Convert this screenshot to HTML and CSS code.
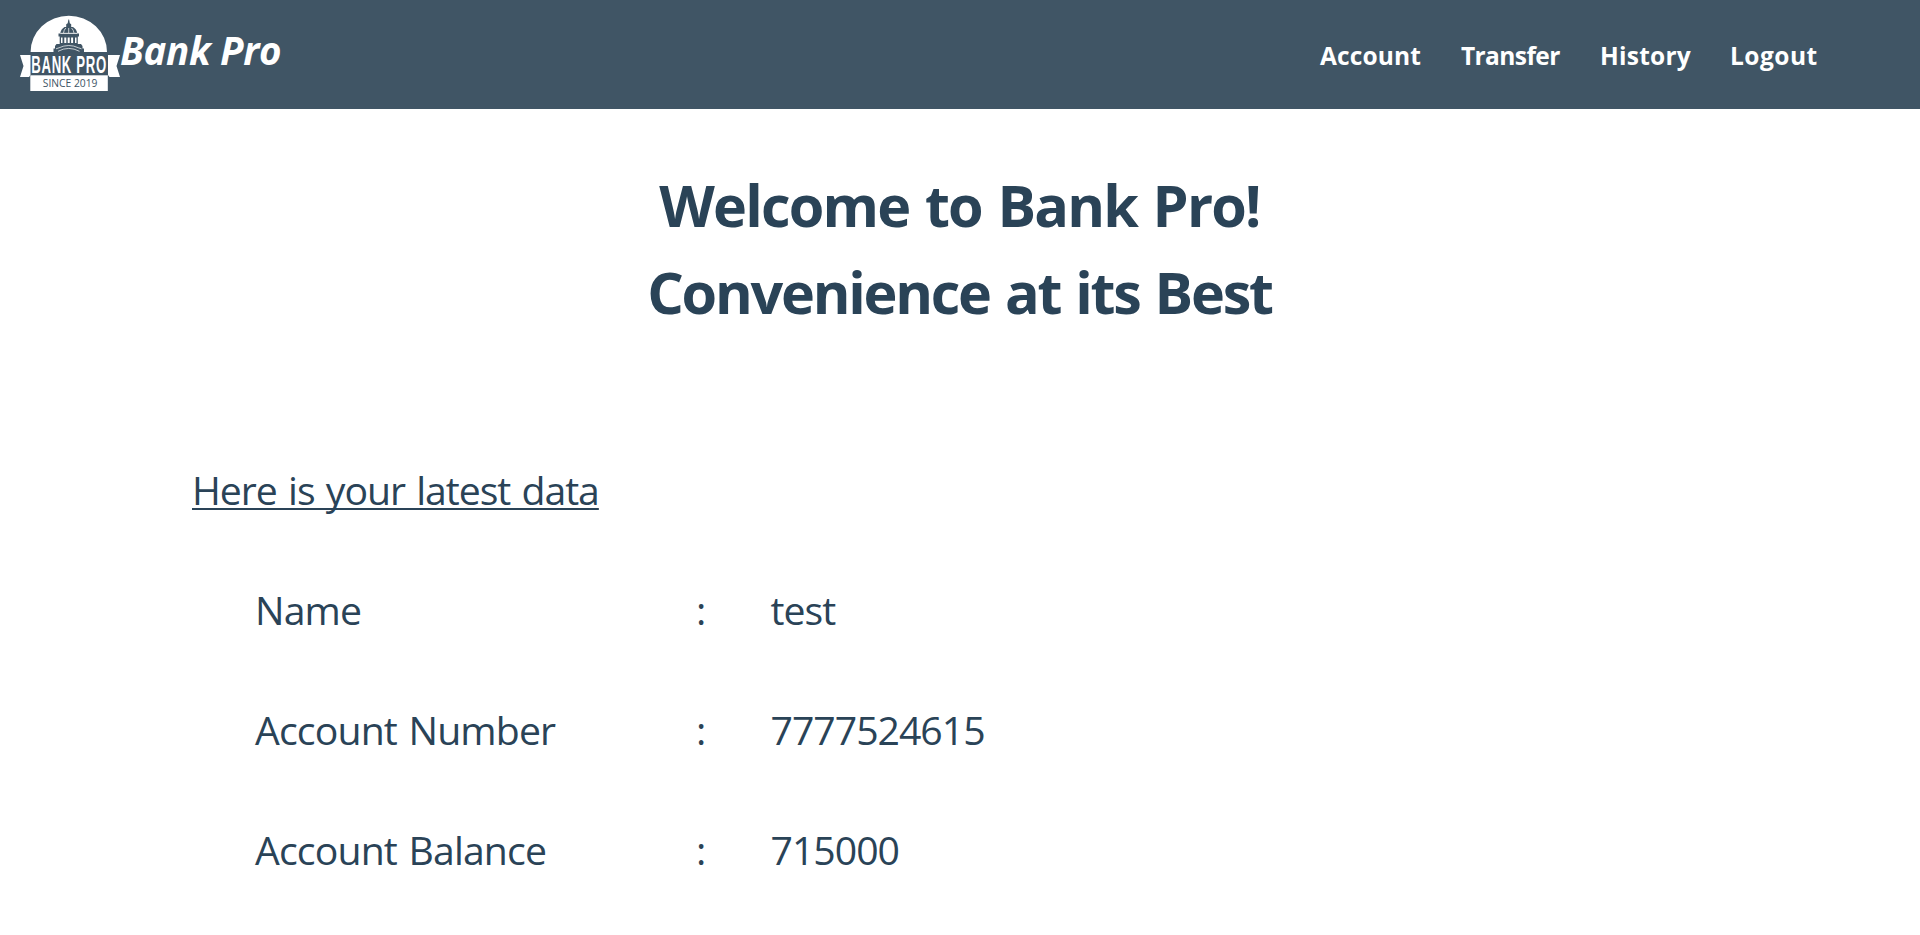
FILE: index.html
```html
<!DOCTYPE html>
<html lang="en">
<head>
<meta charset="utf-8">
<title>Bank Pro</title>
<link rel="stylesheet" href="styles.css">
</head>
<body>
<header class="navbar">
  <a class="brand">
    <svg class="logo" width="100" height="77" viewBox="0 0 100 77">
      <path class="paper" d="M10.600 37A38.200 36.300 0 0 1 87 37Z"/>
      <path class="paper" d="M0 40H10.500V60L9 62H0L3.500 51ZM100 40H88V60L89.500 62H100L96.500 51Z"/>
      <rect class="paper" x="10.300" y="60.300" width="77.500" height="15.700"/>
      <g class="ink">
        <path d="M48.400 4.500h.7l.7 3.800 1.400 1V12h-5V9.300l1.500-1Z"/>
        <path d="M44.500 12H53Q56.500 14 57.200 18H40.300Q41 14 44.500 12Z"/>
        <path d="M38.500 18.500H59V21.500H57.800V29H61L62.500 31V33.500H64V37.500H33.500V33.500H35V31L36.500 29H39.700V21.500H38.500Z"/>
      </g>
      <g class="gap">
        <path d="M45.800 13Q43.800 15 43.500 18M48.700 13V18M51.600 13Q53.600 15 54 18"/>
        <path d="M40.500 18.300H57"/>
      </g>
      <path class="paper" d="M41 22.500h1.500V28H41ZM44.300 22.500H46.300V28H44.300ZM47.700 22.500H49.700V28H47.700ZM51.100 22.500H53.100V28H51.100ZM55 22.500h1.500V28H55Z"/>
      <path class="gap" d="M36 33.800L39 32.800Q48.700 28.200 58.500 32.800L61.500 33.800M38 36.300Q48.700 30.500 59.500 36.300"/>
      <text class="logo-name" transform="translate(11.300 58.200) scale(.56 1)">BANK PRO</text>
      <text class="logo-since" transform="translate(22.800 71.700)">SINCE 2019</text>
    </svg>
    <span class="brand-name">Bank Pro</span>
  </a>
  <nav class="menu">
    <a class="link account">Account</a>
    <a class="link transfer">Transfer</a>
    <a class="link history">History</a>
    <a class="link logout">Logout</a>
  </nav>
</header>
<main>
  <h1 class="welcome">
    <span class="welcome-line">Welcome to Bank Pro!</span>
    <span class="welcome-line tagline">Convenience at its Best</span>
  </h1>
  <section class="data">
    <h2 class="lead">Here is your latest data</h2>
    <div class="row"><span>Name</span><span>:</span><span class="value">test</span></div>
    <div class="row"><span>Account Number</span><span>:</span><span class="value">7777524615</span></div>
    <div class="row"><span>Account Balance</span><span>:</span><span class="value">715000</span></div>
  </section>
</main>
</body>
</html>
```
FILE: styles.css
```css
body {
  margin: 0;
  background: #fff;
  color: #2a4357;
  font-family: "Open Sans", "Noto Sans", sans-serif;
}

.navbar {
  display: flex;
  justify-content: space-between;
  box-sizing: border-box;
  height: 109px;
  padding: 15px 102px 0 20px;
  background: #405565;
  color: #fff;
}
.brand { display: flex; align-items: flex-start; }
.logo { display: block; }
.paper { fill: #fff; }
.ink { fill: #405565; }
.gap { fill: none; stroke: #fff; stroke-width: .7; }
.logo-name {
  font: 700 23.5px "Liberation Sans", sans-serif;
  letter-spacing: 1.2px;
  fill: #fff;
}
.logo-since {
  font: 10.3px "Open Sans", sans-serif;
  fill: #405565;
}
.brand-name {
  font-size: 38.5px;
  font-weight: 700;
  font-style: italic;
  line-height: 70px;
  letter-spacing: -.35px;
}

.menu { display: flex; font-size: 24.5px; font-weight: 700; line-height: 82px; }
.account { width: 141px; letter-spacing: .15px; }
.transfer { width: 139px; letter-spacing: -.6px; }
.history { width: 130px; letter-spacing: .25px; }
.logout { width: 88px; letter-spacing: .5px; }

.welcome {
  display: flex;
  flex-direction: column;
  align-items: center;
  margin: 53px 0 0;
  font-size: 57.5px;
  line-height: 87px;
}
.welcome-line { letter-spacing: -1.8px; word-spacing: 2.4px; padding-right: 1px; }
.tagline { letter-spacing: -2.25px; }

.data { padding: 94px 192px 0; font-size: 39.2px; letter-spacing: -.85px; word-spacing: 2.2px; }
.lead {
  margin: 0;
  font-size: 39.2px;
  font-weight: 400;
  line-height: 120px;
  letter-spacing: -1.05px;
  text-decoration: underline;
  text-decoration-thickness: 2px;
  text-underline-offset: 3px;
  text-decoration-skip-ink: none;
}
.row {
  display: grid;
  grid-template-columns: 441px 74.500px 1fr;
  padding-left: 63px;
  line-height: 120px;
}
.value { letter-spacing: -1px; }
```
